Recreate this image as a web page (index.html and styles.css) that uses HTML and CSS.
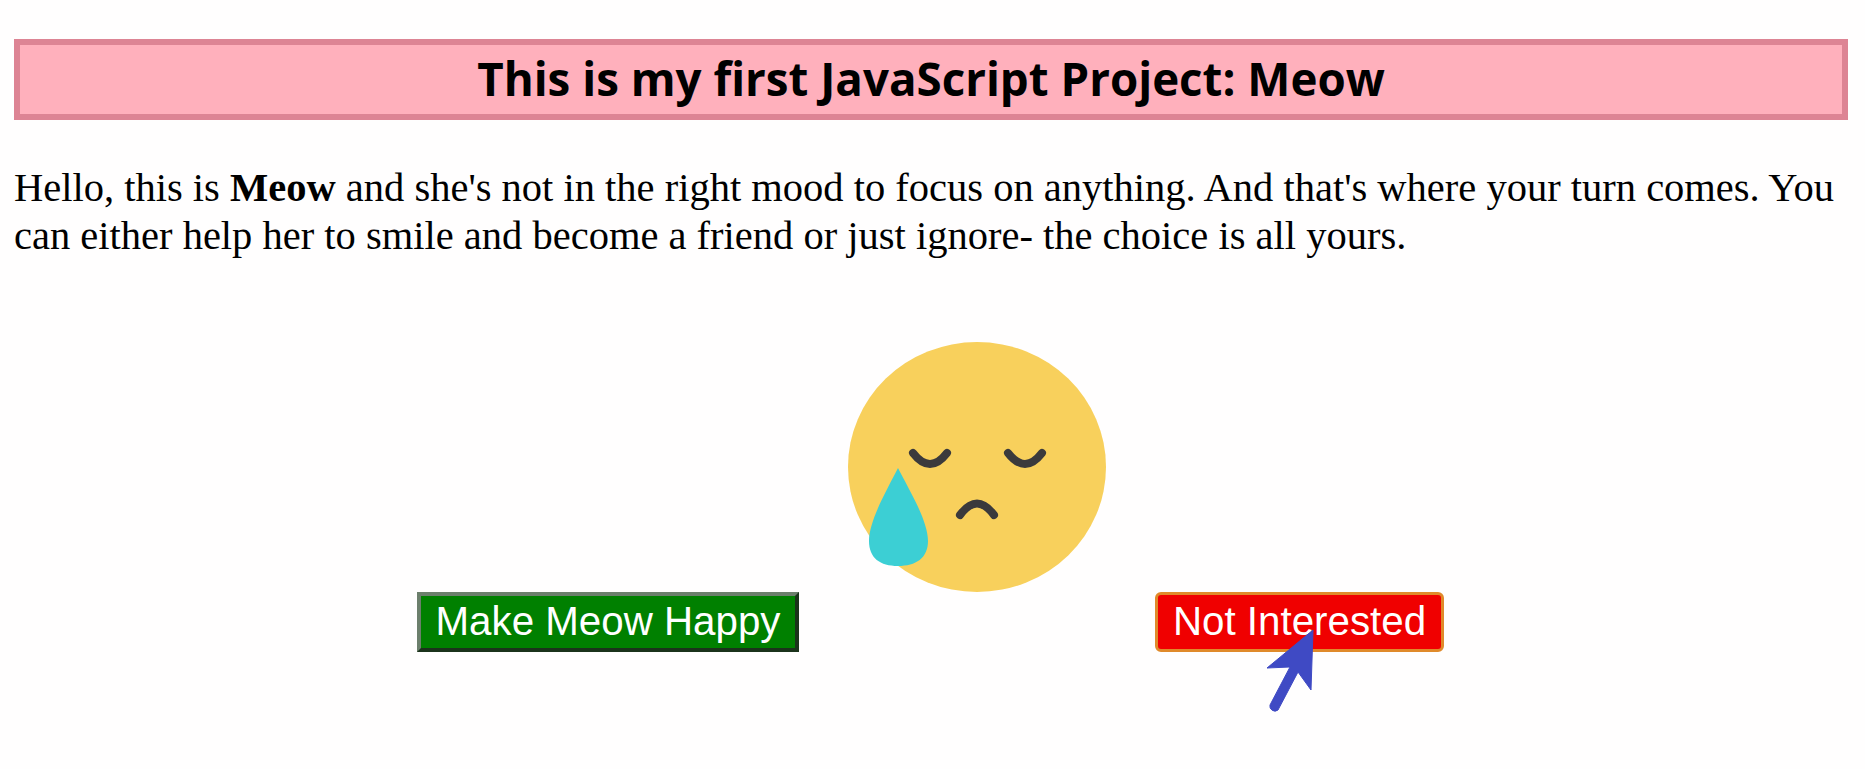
FILE: index.html
```html
<!DOCTYPE html>
<html lang="en">
<head>
    <meta charset="UTF-8">
    <meta name="viewport" content="width=device-width, initial-scale=1.0">
    <title>Meow</title>
    <link rel="stylesheet" href="styles.css">
</head>
<body>
    <h1 class="title">This is my first JavaScript Project: Meow</h1>
    <p class="intro">Hello, this is <b>Meow</b> and she's not in the right mood to focus on anything. And that's where your turn comes. You can either help her to smile and become a friend or just ignore- the choice is all yours.</p>

    <svg class="emoji" viewBox="0 0 340 282" width="340" height="282">
        <ellipse cx="177" cy="157" rx="129" ry="125" fill="#f8d05c"/>
        <g fill="none" stroke="#3b3a3c" stroke-width="8" stroke-linecap="round">
            <path d="M113 143Q130 165 147 143"/>
            <path d="M208 143Q225 165 242 143"/>
            <path d="M160 205Q177 182 194 205"/>
        </g>
        <path d="M98 158C88 178 69 210 69 231C69 248 80 256 98 256C116 256 128 248 128 231C128 210 108 178 98 158Z" fill="#3ccfd4"/>
    </svg>

    <div class="actions">
        <button class="btn btn-happy" id="happy">Make Meow Happy</button>
        <div class="not-wrap">
            <button class="btn btn-no" id="no">Not Interested</button>
            <svg class="cursor" viewBox="0 0 60 90" width="60" height="90">
                <path d="M52 2L50 62L37 44L17 82A5 5 0 0 1 9 77L29 39L6 40Z" fill="#3f4ac4" stroke="#3f4ac4" stroke-width="1" stroke-linejoin="round"/>
            </svg>
        </div>
    </div>

    <script>
        document.getElementById("happy").addEventListener("click", function() {
            alert("Meow is happy now!");
        });
    </script>
</body>
</html>
```

FILE: styles.css
```css
html, body {
    height: 100%;
}
body {
    margin: 0;
    box-sizing: border-box;
    padding: 39px 17px 0 14px;
    background-color: #fffefe;
    color: #000;
    font-family: "Liberation Serif", serif;
}
.title {
    margin: 0;
    height: 81px;
    box-sizing: border-box;
    border: 6px solid #dd8494;
    background: #ffb0bc;
    font-family: "Open Sans", sans-serif;
    font-size: 45.7px;
    font-weight: 700;
    line-height: 66px;
    text-align: center;
}
.intro {
    margin: 44px 0 0;
    font-size: 40.5px;
    line-height: 47.5px;
}
.emoji {
    display: block;
    margin: 51px 0 0 786px;
}
.actions {
    display: flex;
    gap: 356px;
    padding-left: 403px;
}
.not-wrap {
    position: relative;
}
.btn {
    display: block;
    height: 60px;
    padding: 0;
    color: white;
    font-family: "Liberation Sans", sans-serif;
    font-size: 40.3px;
    cursor: pointer;
}
.btn-happy {
    width: 382px;
    background-color: #008000;
    border: 4px solid;
    border-color: #6c7f6c #1b331b #1b331b #6c7f6c;
}
.btn-no {
    width: 289px;
    background-color: #f00000;
    border: 3px solid #e08a2a;
    border-radius: 6px;
}
.cursor {
    position: absolute;
    left: 106px;
    top: 36px;
}
```
